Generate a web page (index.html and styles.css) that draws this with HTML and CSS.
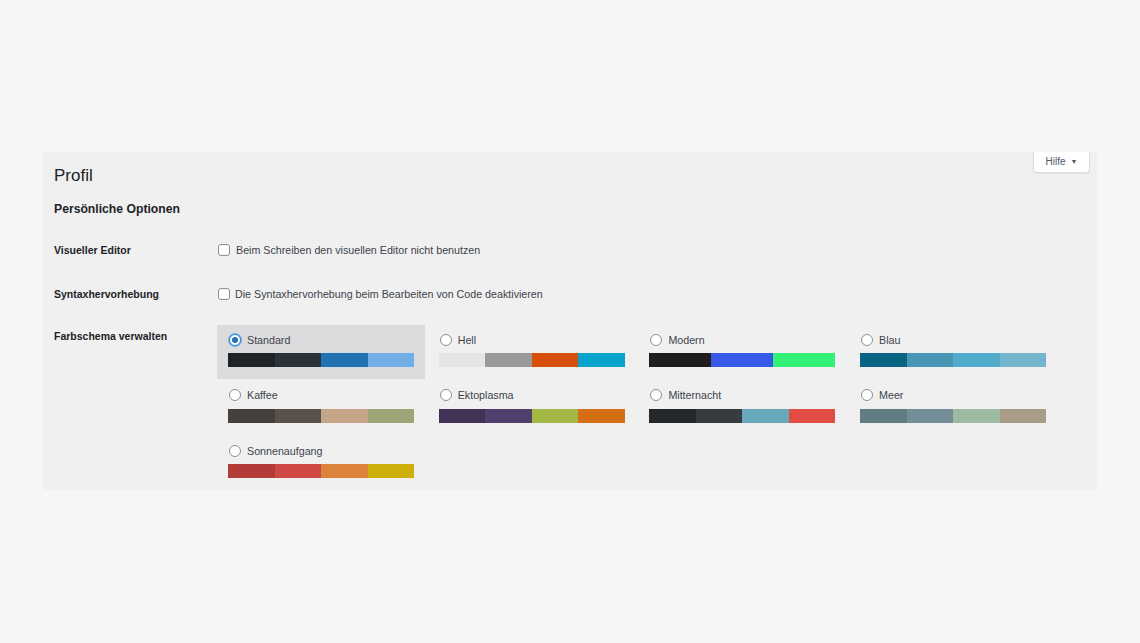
FILE: index.html
```html
<!DOCTYPE html>
<html lang="de">
<head>
<meta charset="utf-8">
<title>Profil</title>
<link rel="stylesheet" href="styles.css">
</head>
<body>
<div class="panel">
  <button class="help-tab">Hilfe <span class="caret">▼</span></button>
  <h1 class="title">Profil</h1>
  <h2 class="section">Persönliche Optionen</h2>
  <div class="form">
    <div class="label">Visueller Editor</div>
    <div class="field"><span class="checkbox"></span><span class="text">Beim Schreiben den visuellen Editor nicht benutzen</span></div>

    <div class="label">Syntaxhervorhebung</div>
    <div class="field"><span class="checkbox"></span><span class="text text-tight">Die Syntaxhervorhebung beim Bearbeiten von Code deaktivieren</span></div>

    <div class="label label-top">Farbschema verwalten</div>
    <div class="schemes">
      <div class="scheme selected">
        <div class="scheme-head"><span class="radio checked"></span><span>Standard</span></div>
        <div class="swatch"><i style="background:#1d2327"></i><i style="background:#2c3338"></i><i style="background:#2271b1"></i><i style="background:#72aee6"></i></div>
      </div>
      <div class="scheme">
        <div class="scheme-head"><span class="radio"></span><span>Hell</span></div>
        <div class="swatch"><i style="background:#e5e5e5"></i><i style="background:#999999"></i><i style="background:#d64e07"></i><i style="background:#04a4cc"></i></div>
      </div>
      <div class="scheme">
        <div class="scheme-head"><span class="radio"></span><span>Modern</span></div>
        <div class="swatch"><i style="background:#1e1e1e"></i><i style="background:#3858e9"></i><i style="background:#33f078"></i></div>
      </div>
      <div class="scheme">
        <div class="scheme-head"><span class="radio"></span><span>Blau</span></div>
        <div class="swatch"><i style="background:#096484"></i><i style="background:#4796b3"></i><i style="background:#52accc"></i><i style="background:#74b6ce"></i></div>
      </div>
      <div class="scheme">
        <div class="scheme-head"><span class="radio"></span><span>Kaffee</span></div>
        <div class="swatch"><i style="background:#46403c"></i><i style="background:#59524c"></i><i style="background:#c7a589"></i><i style="background:#9ea476"></i></div>
      </div>
      <div class="scheme">
        <div class="scheme-head"><span class="radio"></span><span>Ektoplasma</span></div>
        <div class="swatch"><i style="background:#413256"></i><i style="background:#523f6d"></i><i style="background:#a3b745"></i><i style="background:#d46f15"></i></div>
      </div>
      <div class="scheme">
        <div class="scheme-head"><span class="radio"></span><span>Mitternacht</span></div>
        <div class="swatch"><i style="background:#25282b"></i><i style="background:#363b3f"></i><i style="background:#69a8bb"></i><i style="background:#e14d43"></i></div>
      </div>
      <div class="scheme">
        <div class="scheme-head"><span class="radio"></span><span>Meer</span></div>
        <div class="swatch"><i style="background:#627c83"></i><i style="background:#738e96"></i><i style="background:#9ebaa0"></i><i style="background:#aa9d88"></i></div>
      </div>
      <div class="scheme">
        <div class="scheme-head"><span class="radio"></span><span>Sonnenaufgang</span></div>
        <div class="swatch"><i style="background:#b43c38"></i><i style="background:#cf4944"></i><i style="background:#dd823b"></i><i style="background:#ccaf0b"></i></div>
      </div>
    </div>
  </div>
</div>
</body>
</html>
```

FILE: styles.css
```css
html, body {
  margin: 0;
  padding: 0;
}
body {
  background: #f6f6f8;
  font-family: "Liberation Sans", Arial, sans-serif;
  color: #3c434a;
  height: 643px;
  overflow: hidden;
}
.panel {
  position: relative;
  box-sizing: border-box;
  margin: 152px 0 0 43px;
  width: 1054px;
  height: 338px;
  background: #f0f0f1;
  padding: 14px 0 0 11px;
}
.help-tab {
  position: absolute;
  top: 0;
  right: 7px;
  width: 57px;
  height: 21px;
  box-sizing: border-box;
  background: #ffffff;
  border: 1px solid #dcdcde;
  border-top: none;
  border-radius: 0 0 4px 4px;
  box-shadow: 0 1px 1px rgba(0,0,0,0.06);
  font-family: "Liberation Sans", Arial, sans-serif;
  font-size: 10px;
  color: #50575e;
  padding: 0 0 1px 0;
  display: flex;
  align-items: center;
  justify-content: center;
  gap: 5px;
}
.caret {
  font-size: 7px;
  color: #50575e;
}
.title {
  margin: 0;
  font-size: 17px;
  line-height: 20px;
  font-weight: 400;
  color: #1d2327;
}
.section {
  margin: 15px 0 0 0;
  font-size: 12.2px;
  line-height: 16px;
  font-weight: 700;
  color: #1d2327;
}
.form {
  margin-top: 21px;
  display: grid;
  grid-template-columns: 163px 1fr;
  row-gap: 19.5px;
}
.label {
  font-size: 10.5px;
  font-weight: 700;
  color: #1d2327;
  line-height: 20px;
  padding-top: 2px;
}
.label-top {
  padding-top: 1px;
}
.field {
  height: 24px;
  display: flex;
  align-items: center;
  font-size: 10.7px;
  color: #3c434a;
}
.checkbox {
  width: 12px;
  height: 12px;
  box-sizing: border-box;
  border: 1px solid #8c8f94;
  border-radius: 3px;
  background: #ffffff;
  margin-left: 1px;
  margin-right: 6px;
  flex: none;
}
.field .text-tight {
  margin-left: -1px;
}
.schemes {
  display: grid;
  grid-template-columns: repeat(4, 208px);
  grid-auto-rows: 54px;
  column-gap: 2.7px;
  row-gap: 1.5px;
}
.scheme {
  box-sizing: border-box;
  padding: 8px 0 0 11px;
}
.scheme.selected {
  background: #dcdcde;
}
.scheme-head {
  display: flex;
  align-items: center;
  height: 13px;
  font-size: 10.7px;
  color: #3c434a;
  gap: 6px;
}
.radio {
  width: 12px;
  height: 12px;
  box-sizing: border-box;
  border: 1px solid #8c8f94;
  border-radius: 50%;
  background: #ffffff;
  margin-left: 1px;
  flex: none;
  display: flex;
  align-items: center;
  justify-content: center;
}
.radio.checked {
  border-color: #3582c4;
  box-shadow: 0 0 0 1px #72aee6;
}
.radio.checked::after {
  content: "";
  width: 6px;
  height: 6px;
  border-radius: 50%;
  background: #2271b1;
}
.swatch {
  margin-top: 7px;
  width: 186px;
  height: 14px;
  display: flex;
}
.swatch i {
  flex: 1;
  display: block;
}
```
